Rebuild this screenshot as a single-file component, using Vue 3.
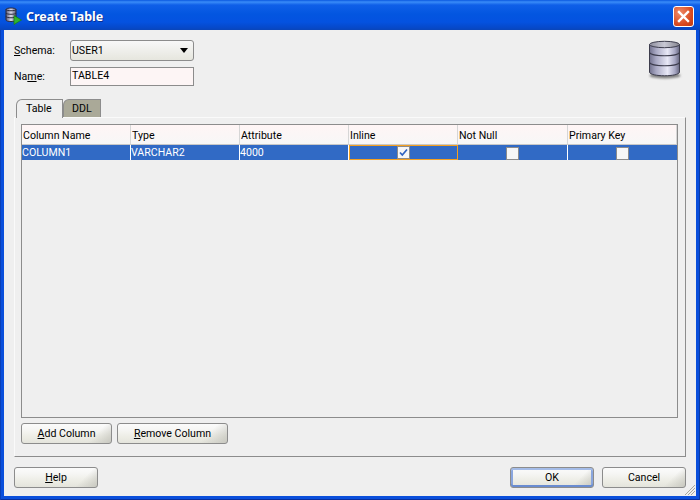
<script setup>
const columns = ['Column Name', 'Type', 'Attribute', 'Inline', 'Not Null', 'Primary Key']
</script>

<template>
  <div class="window">
    <header class="titlebar">
      <svg class="title-icon" width="17" height="19" viewBox="0 0 17 19">
        <defs>
          <linearGradient id="smallDb" x1="0" x2="1" y1="0" y2="0">
            <stop offset="0" stop-color="#5a5a78" />
            <stop offset="0.5" stop-color="#dcdcec" />
            <stop offset="1" stop-color="#55556f" />
          </linearGradient>
        </defs>
        <path d="M1 3.5C1 1.5 11 1.5 11 3.5V14C11 16 1 16 1 14Z" fill="url(#smallDb)" stroke="#2a2a3c" stroke-width="1" />
        <path d="M1 3.5C1 5.2 11 5.2 11 3.5M1 7C1 8.7 11 8.7 11 7M1 10.5C1 12.2 11 12.2 11 10.5" fill="none" stroke="#2a2a3c" stroke-width="1" />
        <path d="M9 9.5L16.5 14L9 18.5Z" fill="#2fb52f" stroke="#177a17" stroke-width="0.7" />
      </svg>
      <span class="title-text">Create Table</span>
      <button class="close" aria-label="Close">
        <svg width="13" height="13" viewBox="0 0 13 13">
          <path d="M2 2L11 11M11 2L2 11" stroke="#fff" stroke-width="2.4" stroke-linecap="square" />
        </svg>
      </button>
    </header>

    <main class="body">
      <section class="form">
        <div class="fields">
          <div class="field">
            <label class="label"><u>S</u>chema:</label>
            <div class="select"><span>USER1</span><i class="caret"></i></div>
          </div>
          <div class="field">
            <label class="label">Na<u>m</u>e:</label>
            <div class="input">TABLE4</div>
          </div>
        </div>
        <svg class="db" width="36" height="42" viewBox="0 0 36 42">
          <defs>
            <linearGradient id="bigDb" x1="0" x2="1" y1="0" y2="0">
              <stop offset="0" stop-color="#70708c" />
              <stop offset="0.22" stop-color="#a9a9c4" />
              <stop offset="0.6" stop-color="#e8e8f6" />
              <stop offset="0.85" stop-color="#a6a6c2" />
              <stop offset="1" stop-color="#66667f" />
            </linearGradient>
            <linearGradient id="bigDbTop" x1="0" x2="1" y1="0" y2="0">
              <stop offset="0" stop-color="#8e8e9e" />
              <stop offset="0.5" stop-color="#c8c8d4" />
              <stop offset="1" stop-color="#85858f" />
            </linearGradient>
            <filter id="dbShadow" x="-20%" y="-50%" width="140%" height="200%">
              <feGaussianBlur stdDeviation="1.2" />
            </filter>
          </defs>
          <ellipse cx="17" cy="35.500" rx="15.500" ry="3" fill="#808080" filter="url(#dbShadow)" />
          <path d="M1.500 4.500V32C1.500 37 31.500 37 31.500 32V4.500Z" fill="url(#bigDb)" stroke="#3d3d4d" />
          <ellipse cx="16.500" cy="4.500" rx="15" ry="3.200" fill="url(#bigDbTop)" stroke="#3d3d4d" />
          <path d="M1.500 12C1.500 17 31.500 17 31.500 12M1.500 22C1.500 27 31.500 27 31.500 22" fill="none" stroke="#3d3d4d" stroke-width="1.100" />
        </svg>
      </section>

      <nav class="tabs">
        <div class="tab active">Table</div>
        <div class="tab">DDL</div>
      </nav>

      <section class="panel">
        <div class="table">
          <div class="row head">
            <div v-for="c in columns" :key="c" class="cell">{{ c }}</div>
          </div>
          <div class="row selected">
            <div class="cell">COLUMN1</div>
            <div class="cell">VARCHAR2</div>
            <div class="cell">4000</div>
            <div class="cell center focus">
              <span class="check">
                <svg width="9" height="9" viewBox="0 0 9 9">
                  <path d="M1 4.500L3.300 7L8 1.500" fill="none" stroke="#2f62c0" stroke-width="1.700" />
                </svg>
              </span>
            </div>
            <div class="cell center"><span class="check"></span></div>
            <div class="cell center last"><span class="check"></span></div>
          </div>
        </div>
        <div class="table-actions">
          <button class="btn add"><u>A</u>dd Column</button>
          <button class="btn remove"><u>R</u>emove Column</button>
        </div>
      </section>

      <footer class="footer">
        <button class="btn wide"><u>H</u>elp</button>
        <div class="footer-right">
          <button class="btn wide default">OK</button>
          <button class="btn wide">Cancel</button>
        </div>
      </footer>
      <svg class="grip" width="12" height="12" viewBox="0 0 12 12">
        <path d="M11 1L1 11M11 4L4 11M11 7L7 11" stroke="#a8a89c" stroke-width="1" />
      </svg>
    </main>
  </div>
</template>

<style>
html, body { margin: 0; }
</style>

<style scoped>
.window {
  width: 700px;
  height: 500px;
  display: flex;
  flex-direction: column;
  box-sizing: border-box;
  background: #0a4fdc;
  box-shadow: inset 1px 0 #0a3fb8, inset -1px 0 #083aa8, inset 0 -1px #0730a0;
  font: 10.6px/13px Roboto, Tahoma, sans-serif;
  color: #000;
  overflow: hidden;
}
.titlebar {
  height: 30px;
  flex: none;
  display: flex;
  align-items: center;
  padding: 0 6px 0 5px;
  box-sizing: border-box;
  background: linear-gradient(#0a58e0 0, #3a8cf8 2px, #0f5fe8 5px, #0356e0 14px, #0452e0 22px, #0648c8 28px, #0a45b8 30px);
}
.title-icon { flex: none; margin-top: 1px; }
.title-text {
  margin-left: 4px;
  padding-top: 3px;
  color: #fff;
  font: bold 12.5px/16px "Noto Sans", Tahoma, sans-serif;
  text-shadow: 1px 1px 0 #0a2f90;
  flex: 1;
}
.close {
  width: 21px;
  height: 21px;
  padding: 0;
  border: 1px solid #fff;
  border-radius: 3px;
  background: radial-gradient(circle at 30% 30%, #ee8a68, #d8481e 65%, #c03a10);
  display: flex;
  align-items: center;
  justify-content: center;
  margin-top: 2px;
}
.body {
  position: relative;
  flex: 1;
  margin: 0 4px 4px 4px;
  padding: 10px 10px 8px;
  background: #efefef;
  display: flex;
  flex-direction: column;
  min-height: 0;
}
.form { display: flex; justify-content: space-between; height: 59px; flex: none; }
.fields { display: flex; flex-direction: column; gap: 6px; }
.field { display: flex; align-items: center; height: 20px; }
.label { width: 56px; flex: none; }
.select {
  width: 124px;
  height: 21px;
  box-sizing: border-box;
  border: 1px solid #8c8c8c;
  border-radius: 3px;
  background: linear-gradient(#f8f8f8, #e6e6de);
  display: flex;
  align-items: center;
  justify-content: space-between;
  padding: 1px 5px 0 1px;
}
.caret {
  width: 0;
  height: 0;
  border: 4px solid transparent;
  border-top: 5px solid #000;
  border-bottom: 0;
}
.input {
  width: 124px;
  height: 19px;
  box-sizing: border-box;
  border: 1px solid #8c8c8c;
  background: #fdf5f5;
  padding: 1px 1px;
}
.db { margin-right: 2px; flex: none; }
.tabs { display: flex; height: 18px; flex: none; padding-left: 2px; align-items: flex-end; position: relative; z-index: 1; }
.tab {
  height: 18px;
  box-sizing: border-box;
  width: 38px;
  padding: 2px 0 0 8px;
  border: 1px solid #8c8c8c;
  border-bottom: 0;
  border-top-left-radius: 6px;
  background: #aaa998;
}
.tab.active {
  background: #efefef;
  width: 47px;
  height: 19px;
  margin-bottom: -1px;
  padding-left: 9px;
}
.panel {
  flex: 1;
  min-height: 0;
  display: flex;
  flex-direction: column;
  border-top: 1px solid #fafafa;
  border-right: 1px solid #8c8c8c;
  border-bottom: 1px solid #8c8c8c;
  border-left: 1px solid #fafafa;
  padding: 6px 7px 12px 6px;
}
.table {
  flex: 1;
  min-height: 0;
  border: 1px solid #8c8c8c;
  background: #efefef;
}
.row { display: grid; grid-template-columns: 109px 109px 109px 109px 110px 109px; }
.head .cell {
  height: 20px;
  box-sizing: border-box;
  padding: 4px 1px 0;
  border-right: 1px solid #d6d6d6;
  border-bottom: 1px solid #c8c8c8;
  background: linear-gradient(#fff5f5, #f7f7f7);
}
.selected { background: #316ac5; color: #fff; height: 15px; }
.selected .cell {
  height: 15px;
  box-sizing: border-box;
  padding: 1px 0 0;
  border-right: 1px solid #fff;
}
.selected .last { border-right: 0; }
.center { display: flex; align-items: center; justify-content: center; }
.selected .focus { border: 1px solid #f4a020; padding: 0; }
.check {
  width: 13px;
  height: 13px;
  box-sizing: border-box;
  border: 1px solid #8c8c8c;
  background: #f7f7f7;
  display: flex;
  align-items: center;
  justify-content: center;
}
.table-actions { display: flex; gap: 5px; flex: none; margin-top: 5px; }
.btn {
  height: 21px;
  box-sizing: border-box;
  padding: 0;
  border: 1px solid #8c8c8c;
  border-radius: 3px;
  font: inherit;
  color: #000;
  background:
    linear-gradient(135deg, rgba(255,255,255,0) 78%, #c8c8c0 100%),
    linear-gradient(#fbfbfb 0, #f6f6f4 30%, #ecece4 70%, #e4e4dc 100%);
}
.add { width: 91px; }
.remove { width: 111px; }
.footer { flex: none; display: flex; justify-content: space-between; margin-top: 10px; }
.footer-right { display: flex; gap: 8px; }
.wide { width: 84px; }
.default {
  box-shadow: inset 0 2px #a4bce8, inset 0 -2px #6a8cd0, inset 2px 0 #8aa6de, inset -2px 0 #8aa6de;
}
.grip { position: absolute; right: 0; bottom: 0; }
</style>
